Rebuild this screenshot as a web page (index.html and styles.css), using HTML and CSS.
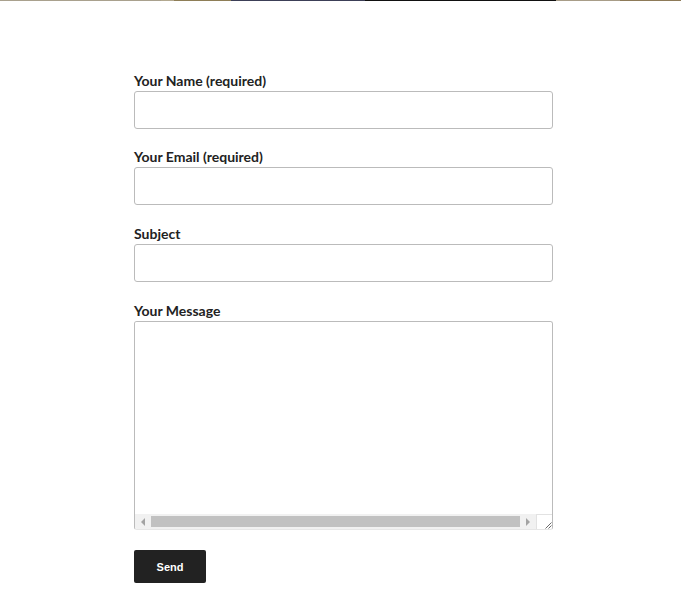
FILE: index.html
```html
<!DOCTYPE html>
<html lang="en">
<head>
<meta charset="utf-8">
<title>Contact</title>
<link rel="stylesheet" href="styles.css">
</head>
<body>
<div class="top-strip"></div>
<main class="page">
  <form class="contact-form">
    <div class="field field-first">
      <label class="field-label" for="name">Your Name (required)</label>
      <input class="field-input" id="name" type="text">
    </div>
    <div class="field">
      <label class="field-label" for="email">Your Email (required)</label>
      <input class="field-input" id="email" type="email">
    </div>
    <div class="field">
      <label class="field-label" for="subject">Subject</label>
      <input class="field-input" id="subject" type="text">
    </div>
    <div class="field field-message">
      <label class="field-label" for="message">Your Message</label>
      <div class="message-box">
        <textarea class="message-input" id="message"></textarea>
        <div class="hscroll">
          <div class="sb-btn">
            <svg width="6" height="8" viewBox="0 0 6 8"><path d="M5 0 L1 4 L5 8 Z" fill="#a3a3a3"/></svg>
          </div>
          <div class="sb-thumb"></div>
          <div class="sb-btn">
            <svg width="6" height="8" viewBox="0 0 6 8"><path d="M1 0 L5 4 L1 8 Z" fill="#a3a3a3"/></svg>
          </div>
          <div class="sb-corner">
            <svg width="9" height="9" viewBox="0 0 9 9"><path d="M8.5 2.5 L2.5 8.5 M8.5 5.5 L5.5 8.5" stroke="#6b6b6b" stroke-width="1"/></svg>
          </div>
        </div>
      </div>
    </div>
    <button class="send-btn" type="button">Send</button>
  </form>
</main>
</body>
</html>
```
FILE: styles.css
```css
html, body {
  margin: 0;
  padding: 0;
  background: #fff;
}
body {
  font-family: Lato, "Liberation Sans", sans-serif;
  color: #222;
}
.top-strip {
  height: 1px;
  background: linear-gradient(to right,
    #a9a18e 0, #a9a18e 161px,
    #b3a990 161px, #b3a990 174px,
    #8e7e57 174px, #8e7e57 231px,
    #3c3f57 231px, #3c3f57 365px,
    #111 365px, #111 556px,
    #a89d88 556px, #a89d88 620px,
    #8d7a58 620px, #8d7a58 681px);
}
.page {
  padding: 70px 0 0 134px;
}
.contact-form {
  width: 419px;
  display: flex;
  flex-direction: column;
}
.field {
  display: flex;
  flex-direction: column;
  margin-bottom: 19px;
}
.field-first {
  margin-bottom: 18px;
}
.field-label {
  font-size: 14px;
  font-weight: 700;
  line-height: 20px;
  height: 20px;
  color: #222;
}
.field-input {
  box-sizing: border-box;
  width: 419px;
  height: 38px;
  margin: 0;
  border: 1px solid #bbb;
  border-radius: 3px;
  background: #fff;
  padding: 6px 8px;
  font: 14px Lato, sans-serif;
}
.field-message {
  margin-bottom: 20px;
}
.message-box {
  box-sizing: border-box;
  width: 419px;
  height: 209px;
  border: 1px solid #bbb;
  border-bottom-color: #e6e6e6;
  border-radius: 3px;
  display: flex;
  flex-direction: column;
  overflow: hidden;
}
.message-input {
  flex: 1;
  border: none;
  resize: none;
  outline: none;
  margin: 0;
  padding: 6px 8px;
  font: 14px Lato, sans-serif;
  background: #fff;
}
.hscroll {
  height: 15px;
  display: flex;
  background: #f1f1f1;
}
.sb-btn {
  width: 16px;
  display: flex;
  align-items: center;
  justify-content: center;
}
.sb-thumb {
  flex: 1;
  margin: 2px 0;
  background: #c1c1c1;
}
.sb-corner {
  width: 16px;
  background: #fff;
  border-left: 1px solid #e2e2e2;
  border-top: 1px solid #e2e2e2;
  box-sizing: border-box;
  display: flex;
  align-items: flex-end;
  justify-content: flex-end;
}
.sb-corner svg {
  display: block;
}
.send-btn {
  width: 72px;
  height: 33px;
  margin: 0;
  padding: 0;
  border: none;
  border-radius: 2px;
  background: #222;
  color: #fff;
  font: 700 11px "Liberation Sans", Arial, sans-serif;
  cursor: pointer;
}
```
